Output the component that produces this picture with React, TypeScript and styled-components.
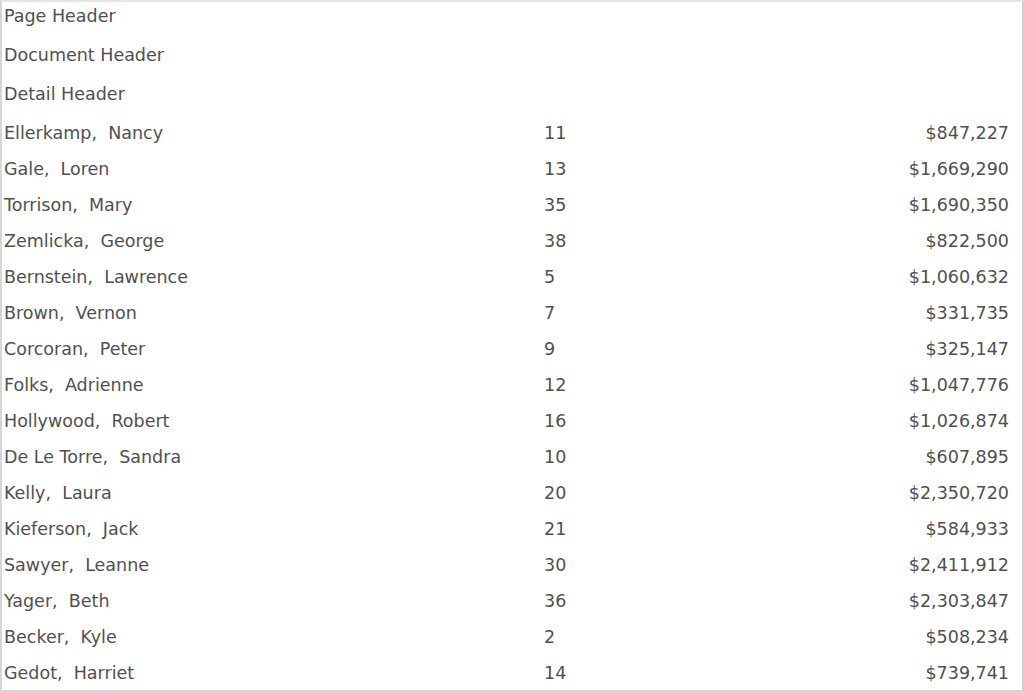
import React from "react";
import styled, { createGlobalStyle } from "styled-components";

const Global = createGlobalStyle`
  html, body { margin: 0; padding: 0; background: #ffffff; }
  body { font-family: Tahoma, "DejaVu Sans", sans-serif; }
`;

const Frame = styled.div`
  box-sizing: border-box;
  width: 1024px;
  height: 692px;
  overflow: hidden;
  border-top: 2px solid #e4e4e4;
  border-left: 2px solid #d6d6d6;
  border-right: 2px solid #d0d0d0;
  border-bottom: 2px solid #d6d6d6;
  padding: 0 13px 0 2px;
  color: #505050;
  font-size: 17.5px;
  display: flex;
  flex-direction: column;
`;

const HeaderRow = styled.div`
  flex-shrink: 0;
  height: 39px;
  line-height: 28px;
  white-space: nowrap;
`;

const DataRow = styled.div`
  flex-shrink: 0;
  display: grid;
  grid-template-columns: 540px 1fr auto;
  height: 36px;
  line-height: 28px;
  white-space: nowrap;
`;

const Cell = styled.div<{ $align?: "left" | "right" }>`
  text-align: ${(p) => p.$align ?? "left"};
  white-space: pre;
`;

const rows: [string, string, string][] = [
  ["Ellerkamp,  Nancy", "11", "$847,227"],
  ["Gale,  Loren", "13", "$1,669,290"],
  ["Torrison,  Mary", "35", "$1,690,350"],
  ["Zemlicka,  George", "38", "$822,500"],
  ["Bernstein,  Lawrence", "5", "$1,060,632"],
  ["Brown,  Vernon", "7", "$331,735"],
  ["Corcoran,  Peter", "9", "$325,147"],
  ["Folks,  Adrienne", "12", "$1,047,776"],
  ["Hollywood,  Robert", "16", "$1,026,874"],
  ["De Le Torre,  Sandra", "10", "$607,895"],
  ["Kelly,  Laura", "20", "$2,350,720"],
  ["Kieferson,  Jack", "21", "$584,933"],
  ["Sawyer,  Leanne", "30", "$2,411,912"],
  ["Yager,  Beth", "36", "$2,303,847"],
  ["Becker,  Kyle", "2", "$508,234"],
  ["Gedot,  Harriet", "14", "$739,741"],
];

export default function App() {
  return (
    <>
      <Global />
      <Frame>
        <HeaderRow>Page Header</HeaderRow>
        <HeaderRow>Document Header</HeaderRow>
        <HeaderRow>Detail Header</HeaderRow>
        {rows.map(([name, n, amt]) => (
          <DataRow key={name}>
            <Cell>{name}</Cell>
            <Cell>{n}</Cell>
            <Cell $align="right">{amt}</Cell>
          </DataRow>
        ))}
      </Frame>
    </>
  );
}
